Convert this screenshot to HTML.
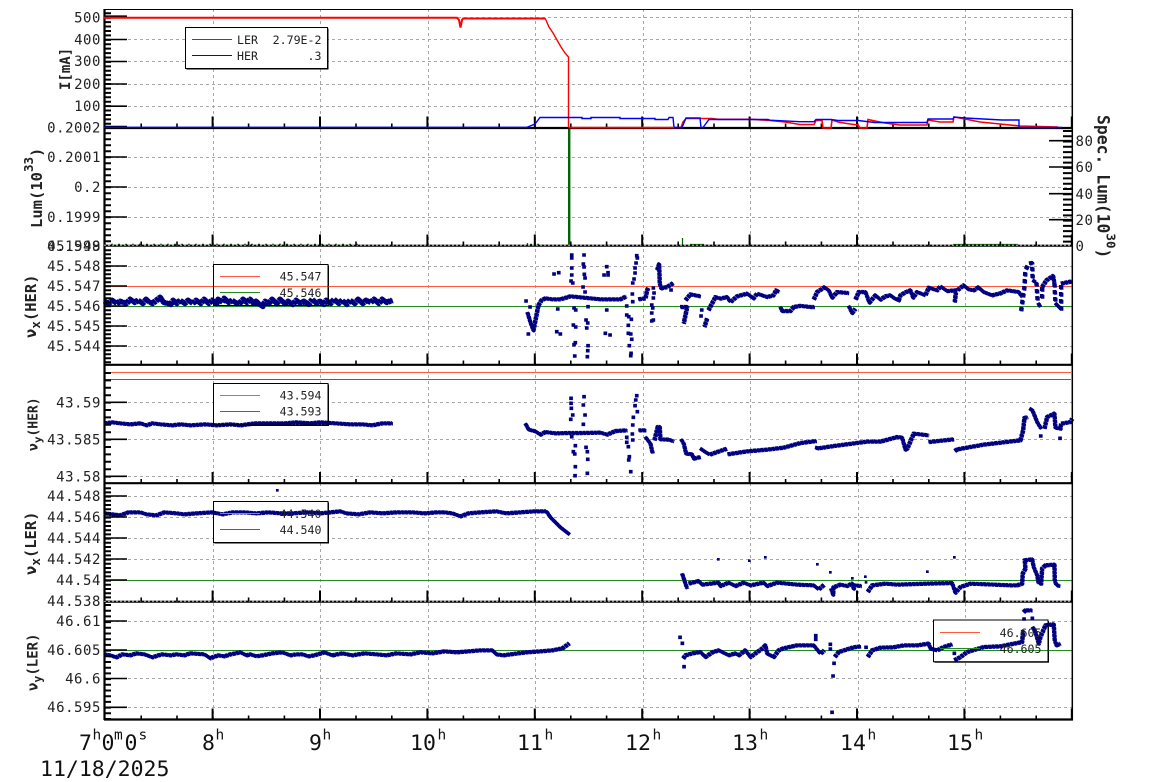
<!DOCTYPE html>
<html><head><meta charset="utf-8"><title>Plot</title>
<style>
html,body{margin:0;padding:0;background:#fff;width:1154px;height:782px;overflow:hidden}
svg{display:block;font-family:"DejaVu Sans Mono","Liberation Mono",monospace}
.g{stroke:#a8a8a8;stroke-width:1;stroke-dasharray:3 3;fill:none}
.k{stroke:#000;fill:none}
.s{stroke:#000080;stroke-width:3.6;fill:none;stroke-linecap:square}
.t{font-size:14px;letter-spacing:.55px;fill:#222;text-anchor:end}
.r{font-size:14px;letter-spacing:.55px;fill:#222}
.l{font-size:11.6px;fill:#222;text-anchor:end}
.b{font-size:21.5px;fill:#111}
.u{font-size:14.5px;fill:#111}
.a{fill:#222;font-weight:bold}
.o{stroke:#ff5a3c;stroke-width:1;fill:none}
.e{stroke:#228b22;stroke-width:1;fill:none}
#data polyline{fill:none;stroke:#000080;stroke-linejoin:round}
</style></head><body>
<svg width="1154" height="782" viewBox="0 0 1154 782" xmlns="http://www.w3.org/2000/svg">
<!-- grid -->
<path class="g" d="M213.5 9V719M320.5 9V719M428.5 9V719M535.5 9V719M643.5 9V719M750.5 9V719M858.5 9V719M965.5 9V719"/>
<path class="g" d="M104 17.5H1072M104 39.5H1072M104 61.5H1072M104 84.5H1072M104 106.5H1072M104 157.5H1072M104 187.5H1072M104 217.5H1072M104 266.5H1072M104 306.5H1072M104 326.5H1072M104 346.5H1072M104 402.5H1072M104 439.5H1072M104 476.5H1072M104 496.5H1072M104 517.5H1072M104 538.5H1072M104 559.5H1072M104 621.5H1072M104 678.5H1072M104 707.5H1072"/>
<!-- legend fills -->
<g fill="#000"><rect x="186.5" y="28.5" width="142" height="41"/><rect x="214.5" y="265.5" width="114.5" height="41"/><rect x="214.5" y="384.5" width="114.5" height="41.5"/><rect x="214.5" y="502.5" width="114.5" height="41"/><rect x="934.5" y="621" width="114.5" height="41.7"/></g>
<g fill="#fff"><rect x="185.5" y="27.5" width="142" height="41"/><rect x="213.5" y="264.5" width="114.5" height="41"/><rect x="213.5" y="383.5" width="114.5" height="41.5"/><rect x="213.5" y="501.5" width="114.5" height="41"/><rect x="933.5" y="620" width="114.5" height="41.7"/></g>
<!-- reference lines -->
<path class="o" d="M104 286.5H1072M104 372.5H1071M104 580.5H1072M104 650.5H1072"/>
<path class="e" d="M104 306.5H1072M104 379.5H1071M104 580.5H1072M104 650.5H1072"/>
<!-- panel 2 luminosity -->
<rect x="568" y="127" width="2.4" height="118" fill="#006400"/>
<path fill="none" stroke="#006400" stroke-width="1.4" stroke-dasharray="2 5" d="M104 244.4H360M530 244.4H540"/>
<path fill="none" stroke="#006400" stroke-width="1.2" d="M682.5 238V245M527.5 243V245M690 244.5H704M917 244V245M953 244.5H1018M1000 243V245"/>
<!-- tuning data -->
<g id="data" stroke-width="3.6" stroke-dasharray="3.2 .5">
<polyline stroke-width="5" points="104,301 108,303 112,300 116,303 120,301 126,303 130,299 134,302 138,300 142,303 146,299 149,302 152,303 156,300 160,297 163,302 167,303 170,304 173,300 176,303 180,300 184,303 188,300 192,303 196,300 200,303 204,299 208,303 212,300 216,303 218,299 222,302 224,298 228,302 232,300 236,303 240,302 243,299 246,302 250,299 253,303 256,301 259,304 262,306 265,301 268,303 272,299 276,303 280,299 284,303 288,301 292,304 296,300 300,303 304,301 308,304 312,299 316,303 320,301 323,304 326,300 330,303 334,299 338,303 342,300 346,304 350,300 354,303 358,299 362,303 366,300 370,302 374,299 378,303 382,299 386,302 392,300"/>
<polyline points="527,312 530,322 533,330 535,320 538,305 541,300 545,298 552,299 560,299 570,296 580,297 590,298 600,299 620,299 626,296"/>
<polyline points="638,299 645,298 646.7,290 648,287"/>
<polyline points="656.7,270 658.7,264 659.3,283 660.7,288 666.7,286.7 673,282.7"/>
<polyline points="680,306.7 686.7,306.7 685,315 683.3,323.3"/>
<polyline points="685,300 690,294 700,296"/>
<polyline points="706.7,318 704,326.7"/>
<polyline points="708,310 711.7,303 715,296.7 720,298.3 726.7,296.7 730,301.7 736.7,296 746.7,293.3 753,298 756.7,293.3 766.7,296.7 773,295 775.7,290 779,291.7"/>
<polyline points="780,306.7 781.7,310.7 790,310.7 793.3,306.7 800,305.5 810,306.7 814,306.7"/>
<polyline points="813.3,299.3 816.7,291.7 824,287 828.3,290 831.7,297.3 836.7,291.7 848.3,292.7"/>
<polyline points="848.3,305.7 851.7,312.7 855,308.3"/>
<polyline points="855,299.3 858.3,291.7 865,291.7 869,302.3 875,295 880,299.3 885,296 890,295 894,298 898.3,300 900,295 905,292 910,290 912.7,297.3 916.7,291.7 925,295 928.3,287.3 936.7,290 940,286 946.7,290.7 955,290 956.7,290 963.3,285 968,289 973.3,290 978,287 983.3,291.7 991.7,295 1000,293 1006.7,290 1018.3,291.7 1021.7,296.7"/>
<polyline stroke-dasharray="4 3" points="1020.7,310.7 1024,286.7 1025,270 1028.3,263.3 1031.7,262.7 1032.3,280"/>
<polyline points="1032.3,280 1035,281.7"/>
<polyline stroke-dasharray="4 3" points="1036,282 1037.3,301.7 1040.7,308.3"/>
<polyline stroke-dasharray="4 3" points="1041.7,298 1041.7,287"/>
<polyline points="1041.7,286.7 1046,280 1052.7,275.7 1054,283"/>
<polyline stroke-dasharray="4 3" points="1054,283 1055,301.7"/>
<polyline stroke-dasharray="4 3" points="1060.7,310 1060.7,284"/>
<polyline points="1055,303 1060,308"/>
<polyline points="1060.7,283.3 1071.7,281"/>
<polyline points="954.3,302 955.5,292"/>
<polyline points="104,423 112,422 120,423 130,424 140,423 146,425 152,423 160,424 172,425 180,424 190,425 205,424 216,425 230,424 240,425 255,423 270,423 285,423 296,422 310,423 320,422 335,423 350,424 362,424 372,425 382,423 392,423"/>
<polyline points="525,423.3 528.3,429.3 535,431 540,434.3 545,431.7 555,433 566.7,432.7 580,432.7 600,432.3 606.7,434.3 615,430.7 626.7,430"/>
<polyline points="638.3,430 646,430"/>
<polyline points="645,436.7 650,443.3 652.3,453.3"/>
<polyline points="654,440 657.3,426.7 659.3,426.7 660,439 668.3,439.3 673.3,441"/>
<polyline points="680.7,439 683.3,443.3 685.7,453.3 691.7,454 693.3,458.3 700,456.7"/>
<polyline points="700,448.3 705,451.7 709.3,454.3 716.7,451.7 726.7,448.3"/>
<polyline points="727.3,454 746.7,451 766.7,449.3 783.3,447.3 800,442.7 816,440.7"/>
<polyline points="815,447.3 818,448 833.3,445.7 866.7,441.3 880,441.3 896.7,436.7 901.7,437.3 905,449.3 907,448 913.3,433.3 928.3,435"/>
<polyline points="928.3,441.7 953.3,439"/>
<polyline points="954.3,450.7 957,449 983.3,444.3 1020,440 1022.7,430 1024,417.7 1027.3,416.7"/>
<polyline points="1029.3,408.3 1032,410 1036.7,421.7 1040.7,428.3"/>
<polyline points="1044,428.3 1046.7,416.7 1054,413.3 1055,427.3 1060,428.3 1060.7,423.3 1070,421.7 1071.7,418.3"/>
<polyline points="104,513 112,514 120,515 128,512 140,512 146,514 156,515 164,512 176,513 184,514 196,513 212,512 222,514 232,512 244,512 256,513 268,512 280,513 292,513 308,512 320,513 340,511 346,513 358,514 370,512 382,513 396,512 412,512 424,513 436,512 444,512 452,513 460,516 468,513 480,512 496,511 506,513 520,512 534,511 546,511"/>
<polyline points="546,511 550,517 560,527 569,534"/>
<polyline points="681.7,573.3 686.7,588.3"/>
<polyline points="688.3,583.3 698.3,580.7 701.7,584.3 718.3,582.3 720,585.7 728.3,582.3 735,585.7 743.3,582.3 750,585 763.3,582.3 766.7,585.7 776.7,582.3 796.7,584.3 813.3,585 818.3,589 824,584.3"/>
<polyline points="830.7,588.3 832.7,594.3 833,587 840,584.3 846.7,585.7 851.7,583.3 853.3,588.3 854,585 861,585.7"/>
<polyline points="867.3,591.7 871.7,585 885,583.3 896.7,584.3 926.7,583.3 951.7,582.7 955,592.3 960,586.7 970,583.3 1010,585 1016.7,585 1021.7,583.3 1022.3,573.3 1025,568.3 1024.3,560 1031.7,559 1033.3,566.7 1036.7,575 1038.3,583.3 1040.7,583.3 1041.7,568.3 1045,565 1054,564.3 1054.3,580 1056,585 1060,585.7"/>
<polyline points="104,654 110,655 116,657 122,654 130,655 136,653 144,654 152,657 158,655 162,654 170,655 176,654 184,655 190,653 204,654 210,658 212,657 218,655 224,656 230,654 240,652 246,655 250,654 256,656 262,655 272,653 282,652 290,655 296,654 302,654 308,656 314,655 324,652 332,655 342,653 352,655 364,653 376,654 386,655 396,653 410,654 420,652 432,653 444,651 456,652 468,651 480,650 492,650 496,654 503,655 510,654 526,652 540,651 552,650 562,648 569,643"/>
<polyline points="682.7,658.3 685,655 692,653 700,651.7 705,656.7 712,652 718.3,650 728.3,655 735,653 738.3,655 745,650 750,656.7 761.7,648.3 765,645 766.7,653.3 773.3,656.7 778.3,650 783,648 796.7,645 813.3,645 820,653.3 824,650"/>
<polyline points="834.3,656.7 838.3,651.7 846.7,649 853,647 860.7,646"/>
<polyline points="867.3,656.7 871.7,650 880,647.3 893,647 903.3,645 917,645 928.3,643.3 930,648.3 936.7,650 943.3,646.7 951.7,644"/>
<polyline points="954,660 960,656.7 966.7,651.7 983.3,646.7 1000,646 1021.7,641.7 1022.7,630"/>
<polyline points="1023,612 1025,610 1031.7,610"/>
<polyline points="1032.3,626.7 1035,631.7 1038.3,643.3 1040,636.7 1045,625 1053.3,624 1054.3,640 1056,645 1060,643.3"/>
</g>
<use href="#data" transform="translate(.9 .7)"/>
<path class="s" d="M526 301h.1M528.3 334h.1M530 307h.1M554 274h.1M558.7 272.7h.1M571.7 255h.1M571.7 258h.1M571.7 268h.1M571.7 275h.1M571 281h.1M572.7 283h.1M584 255h.1M583.3 264h.1M584 267h.1M584.3 274.3h.1M585 278h.1M583 287h.1M585 292h.1M588 306.7h.1M557.7 309h.1M574 308h.1M575.7 310h.1M606.7 266.7h.1M608 272.7h.1M608 275h.1M604 275h.1M606.7 310h.1M586 320h.1M587.7 323h.1M586.7 328h.1M573.3 325h.1M575.7 327h.1M556.7 331.7h.1M560.3 334h.1M605.3 333.3h.1M610 335h.1M575.3 342.7h.1M574 344.7h.1M574.7 356h.1M588 345.7h.1M587.7 350.7h.1M587.3 356.7h.1M636.7 255.7h.1M637.3 258h.1M636 263h.1M635 268h.1M635 273h.1M634 279h.1M632.7 283h.1M632.3 294h.1M632.7 301.7h.1M626.7 306h.1M626.7 315h.1M628.7 316.7h.1M631.3 319.3h.1M628.3 325.3h.1M628.3 333.3h.1M630.7 334h.1M631.7 339.3h.1M629.3 345.7h.1M631 353.3h.1M630.7 355.7h.1M653.3 288h.1M654 293h.1M653.3 298h.1M651.7 305h.1M652.7 308h.1M651.7 313h.1M653.3 320h.1M651.7 321h.1M671 290h.1M701.7 310h.1M701 316h.1"/>
<path class="s" d="M1040.7 436h.1M1060 438.3h.1M571 398.3h.1M571 403.3h.1M571.3 408.3h.1M572.7 415h.1M570.7 419.3h.1M571.7 436.7h.1M575.3 445.7h.1M573.3 451.7h.1M574.7 454h.1M575.3 466.7h.1M575 475.7h.1M584 396.7h.1M583.3 405h.1M585 415h.1M583.3 424.3h.1M586 447.3h.1M587.3 451.7h.1M587.7 459.3h.1M587.3 473.3h.1M636.7 395.7h.1M635.7 400h.1M635 405.7h.1M637.3 411.7h.1M633.3 417.3h.1M632.7 425h.1M632.3 434h.1M632.7 440h.1M626.7 437.3h.1M626.7 442.3h.1M628.3 446.7h.1M629.3 456.7h.1M628.7 460h.1M630.7 471.7h.1"/>
<path class="s" style="stroke-width:2.6" d="M277.3 490.3h.1M718.3 559.3h.1M749.3 560.7h.1M765.3 557.3h.1M817.3 564.3h.1M830.3 572.3h.1M852.3 578.3h.1M865.3 576.7h.1M866 582.3h.1M927.3 571.7h.1M954.3 557.3h.1"/>
<path class="s" d="M680 637.3h.1M682.3 643.3h.1M684 666.7h.1M815.7 635.7h.1M815.7 639.3h.1M830.3 644.3h.1M830.3 649h.1M834 663.3h.1M833 676h.1M832 712.3h.1M866 647.3h.1M954.3 653.3h.1M1024 619h.1M1032.3 618.3h.1"/>
<!-- axes frame -->
<path class="k" stroke-width="1" d="M104 9.5H1072"/>
<path class="k" stroke-width="2.2" d="M104.5 9V720M104 128H1072M104 245.7H1072M104 364.8H1072M104 483.2H1072M104 601.7H1072M104 719.5H1073"/>
<path class="k" stroke-width="1.5" d="M1072.3 9V720"/>
<path fill="none" stroke="#ddd" stroke-width=".9" stroke-dasharray="2 2" d="M104 245.2H1072M104 601.2H1072"/>
<!-- y major ticks -->
<path class="k" stroke-width="1.6" d="M104 16.2H127M104 39.5H127M104 61.5H127M104 84H127M104 106.2H127M104 126.5H127M104 157H127M104 187H127M104 217H127M104 266H127M104 286H127M104 306H127M104 326H127M104 346H127M104 402.3H127M104 439.3H127M104 476.3H127M104 496H127M104 517H127M104 538H127M104 559H127M104 580H127M104 621H127M104 650H127M104 678.5H127M104 707.3H127M1049 140.7H1072M1049 167H1072M1049 193.7H1072M1049 219.7H1072"/>
<!-- y minor ticks -->
<g class="k" stroke-width="7">
<path stroke-dasharray="2 2.42" d="M107.5 12.3V127"/>
<path stroke-dasharray="2 4" d="M107.5 132.2V245"/>
<path stroke-dasharray="2 2" d="M107.5 249.2V364"/>
<path stroke-dasharray="2 5.4" d="M107.5 372V483"/>
<path stroke-dasharray="2 2.2" d="M107.5 487.2V601"/>
<path stroke-dasharray="2 3.7" d="M107.5 604V719"/>
</g>
<path class="k" stroke-width="9" stroke-dasharray="2 3.27" d="M1067.5 130V245"/>
<!-- x ticks -->
<g class="k" stroke-width="4" stroke-dasharray="1.6 34.2">
<path d="M140.4 125.5H1072"/><path d="M140.4 243.5H1072"/><path d="M140.4 362.5H1072"/><path d="M140.4 481H1072"/><path d="M140.4 599.5H1072"/><path d="M140.4 717.5H1072"/>
</g>
<g class="k" stroke-width="11" stroke-dasharray="2 105.4">
<path d="M211.6 122H1072"/><path d="M211.6 240H1072"/><path d="M211.6 359H1072"/><path d="M211.6 477.5H1072"/><path d="M211.6 596H1072"/><path d="M211.6 714H1072"/>
</g>
<!-- panel 1 current (on top of ticks) -->
<path fill="none" stroke="#f00" stroke-width="2" d="M104 17.8H457L459 20 460.5 27.5 462 20 463 18.5H545"/>
<path fill="none" stroke="#f00" stroke-width="1.4" d="M545 18L549 27 553 33 557 40 561 47 565 53 568.5 57V127.5"/>
<path fill="none" stroke="#f00" stroke-width="1.6" d="M568.5 127.7H674L681 127.5 683 122 686 118.5H712L718 119.3H752L770 120.5 785 122 800 124.5H814L816 120.5H822L823 128H831L832 120 838 122 850 124 858 125 860 128H867L868 119.5 875 121 885 123 900 125H927L928 120 940 122H953L954 117 965 119 980 122 1000 124 1020 126 1058 127"/>
<path fill="none" stroke="#00f" stroke-width="1.4" d="M104 127.3H527L535 124 540 117.5H582V118.5H591V117.5H620V118.5H655V119.5H668L669 117.5H673L674 127.5H682L686 118H700L701 127.5H703L709 119.5H768L770 120.2 800 121.7H814L816 119.5H831L838 120.5H858L875 122.5H927L928 119H953L954 117 965 118 1002 120H1019V127.5H1062"/>
<path fill="none" stroke="#f00" stroke-width="1.6" d="M568.5 127.7H674"/>
<!-- legends on top -->
<g class="k" stroke-width="1">
<rect x="185.5" y="27.5" width="142" height="41"/><rect x="213.5" y="264.5" width="114.5" height="41"/><rect x="213.5" y="383.5" width="114.5" height="41.5"/><rect x="213.5" y="501.5" width="114.5" height="41"/><rect x="933.5" y="620" width="114.5" height="41.7"/>
</g>
<path d="M192 39.5H232" stroke="#f00" fill="none"/><path d="M192 55.5H232" stroke="#00f" fill="none"/>
<path class="o" d="M220 276.5H260M220 395.5H260M220 513.5H260M940 632.5H980"/>
<path class="e" d="M220 292.5H260M220 411.5H260M220 529.5H260M940 648.5H980"/>
<g class="l">
<text x="258" y="44">LER</text><text x="321.5" y="44">2.79E-2</text>
<text x="258" y="60">HER</text><text x="321.5" y="60">.3</text>
<text x="321.5" y="280.7">45.547</text><text x="321.5" y="297">45.546</text>
<text x="321.5" y="399.7">43.594</text><text x="321.5" y="415.7">43.593</text>
<text x="321.5" y="518">44.540</text><text x="321.5" y="534">44.540</text>
<text x="1041.5" y="637">46.605</text><text x="1041.5" y="653">46.605</text>
</g>
<!-- y tick labels -->
<g class="t">
<text x="101" y="22.5">500</text><text x="101" y="44.3">400</text><text x="101" y="66">300</text><text x="101" y="89">200</text><text x="101" y="111">100</text>
<text x="101" y="132.7">0.2002</text><text x="101" y="162">0.2001</text><text x="101" y="192">0.2</text><text x="101" y="222">0.1999</text><text x="101" y="251">0.1998</text>
<text x="101" y="251">45.549</text><text x="101" y="271">45.548</text><text x="101" y="291">45.547</text><text x="101" y="311">45.546</text><text x="101" y="331">45.545</text><text x="101" y="351">45.544</text>
<text x="101" y="407.3">43.59</text><text x="101" y="444.3">43.585</text><text x="101" y="481.3">43.58</text>
<text x="101" y="501">44.548</text><text x="101" y="522">44.546</text><text x="101" y="543">44.544</text><text x="101" y="564">44.542</text><text x="101" y="585">44.54</text><text x="101" y="606">44.538</text>
<text x="101" y="626">46.61</text><text x="101" y="655">46.605</text><text x="101" y="683.5">46.6</text><text x="101" y="712">46.595</text>
</g>
<g class="r">
<text x="1075.5" y="146">80</text><text x="1075.5" y="172">60</text><text x="1075.5" y="199">40</text><text x="1075.5" y="225">20</text><text x="1075.5" y="251">0</text>
</g>
<!-- axis titles -->
<text class="a" font-size="14" transform="translate(70 90) rotate(-90)">I[mA]</text>
<text class="a" font-size="15.5" transform="translate(42 228) rotate(-90)">Lum(10<tspan font-size="12.5" dy="-9">33</tspan><tspan dy="9">)</tspan></text>
<text class="a" font-size="15.5" transform="translate(36 338) rotate(-90)">ν<tspan font-size="12.5" dy="4">x</tspan><tspan dy="-4">(HER)</tspan></text>
<text class="a" font-size="13" transform="translate(37.5 451) rotate(-90)">ν<tspan font-size="11" dy="4">y</tspan><tspan dy="-4">(HER)</tspan></text>
<text class="a" font-size="15.5" transform="translate(36 575) rotate(-90)">ν<tspan font-size="12.5" dy="4">x</tspan><tspan dy="-4">(LER)</tspan></text>
<text class="a" font-size="14" transform="translate(37.5 691) rotate(-90)">ν<tspan font-size="11.5" dy="4">y</tspan><tspan dy="-4">(LER)</tspan></text>
<text font-size="16.4" fill="#222" font-weight="bold" transform="translate(1097.5 115) rotate(90)">Spec. Lum(10<tspan font-size="12.5" dy="-9">30</tspan><tspan dy="9">)</tspan></text>
<!-- x labels -->
<g class="b">
<text x="79" y="750">7</text><text x="101.5" y="750">0</text><text x="124.5" y="750">0</text>
<text x="202" y="750">8</text><text x="309" y="750">9</text><text x="410" y="750">10</text><text x="517" y="750">11</text><text x="625" y="750">12</text><text x="732" y="750">13</text><text x="840" y="750">14</text><text x="947" y="750">15</text>
<text x="40" y="776">11/18/2025</text>
</g>
<g class="u">
<text x="92.5" y="739.5">h</text><text x="114" y="739.5">m</text><text x="138.5" y="739.5">s</text>
<text x="215.5" y="739.5">h</text><text x="322.5" y="739.5">h</text><text x="437.5" y="739.5">h</text><text x="544.5" y="739.5">h</text><text x="652.5" y="739.5">h</text><text x="759.5" y="739.5">h</text><text x="867.5" y="739.5">h</text><text x="974.5" y="739.5">h</text>
</g>
</svg>
</body></html>
